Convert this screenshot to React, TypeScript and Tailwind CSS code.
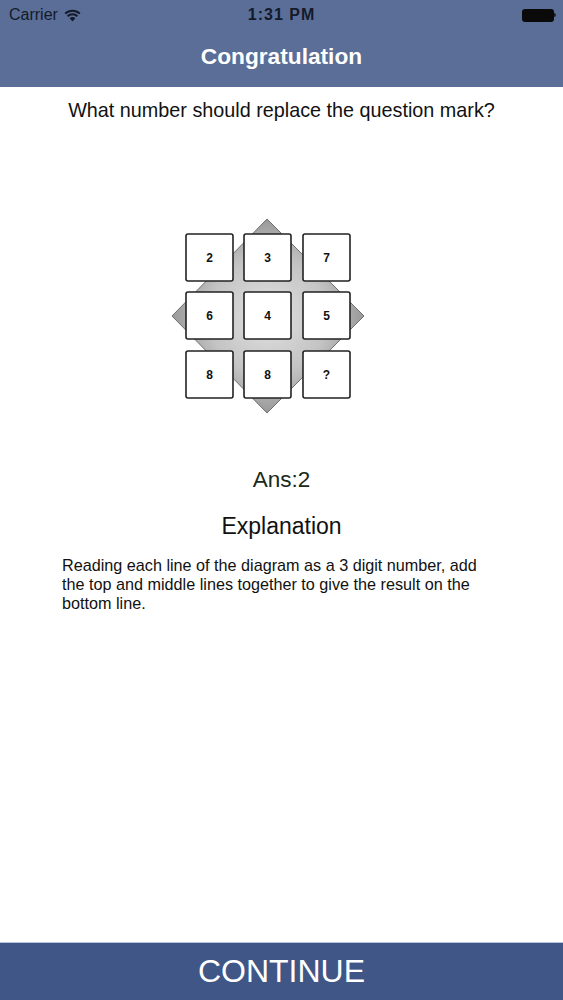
import React from "react";

const cols = [19, 77, 136];
const rows = [20, 78, 137];
const nums = [
  ["2", "3", "7"],
  ["6", "4", "5"],
  ["8", "8", "?"],
];

function Diagram() {
  return (
    <svg width="202" height="204" viewBox="0 0 202 204">
      <defs>
        <radialGradient id="g" cx="50%" cy="50%" r="55%">
          <stop offset="0%" stopColor="#e2e2e2" />
          <stop offset="55%" stopColor="#c4c4c4" />
          <stop offset="100%" stopColor="#8e8e8e" />
        </radialGradient>
      </defs>
      <polygon points="100,5 197,102 100,199 5,102" fill="url(#g)" stroke="#555" strokeWidth="0.8" />
      {rows.map((y, r) =>
        cols.map((x, c) => (
          <g key={`${r}-${c}`}>
            <rect x={x} y={y} width="47" height="47" rx="2" fill="#fff" stroke="#222" strokeWidth="1.6" />
            <text
              x={x + 23.5}
              y={y + 28}
              textAnchor="middle"
              fontFamily="Liberation Sans, Arial, sans-serif"
              fontWeight="bold"
              fontSize="12"
              fill="#111"
            >
              {nums[r][c]}
            </text>
          </g>
        ))
      )}
    </svg>
  );
}

export default function App() {
  return (
    <div className="flex h-[1000px] w-[563px] flex-col bg-white" style={{ fontFamily: "'Liberation Sans', Arial, sans-serif" }}>
      <div className="flex h-[87px] flex-col bg-[#5a6e97]">
        <div className="relative flex h-[30px] items-center pl-[9px] pr-[7px] text-[#141a2a]">
          <div className="flex items-center gap-[6px] text-[16px]">
            <span>Carrier</span>
            <svg width="17" height="13" viewBox="0 0 17 13">
              <path d="M8.5 12.5 L5.6 9.3 A4.2 4.2 0 0 1 11.4 9.3 Z" fill="#141a2a" />
              <path d="M3.6 7.2 A7 7 0 0 1 13.4 7.2" stroke="#141a2a" strokeWidth="2" fill="none" />
              <path d="M1.2 4.6 A10.5 10.5 0 0 1 15.8 4.6" stroke="#141a2a" strokeWidth="2" fill="none" />
            </svg>
          </div>
          <div className="absolute left-0 right-0 text-center text-[16px] font-semibold tracking-[1px]">1:31 PM</div>
          <div className="ml-auto flex items-center">
            <div className="h-[13px] w-[32px] rounded-[3px] bg-[#0a0a0a]" />
            <div className="h-[4px] w-[2px] rounded-r bg-[#222]" />
          </div>
        </div>
        <div className="flex flex-1 items-center justify-center pb-[4px] text-[22.7px] font-semibold text-white">
          Congratulation
        </div>
      </div>
      <div className="flex flex-1 flex-col">
        <div className="mt-[11px] text-center text-[19.8px] leading-[24px] text-[#111]">
          What number should replace the question mark?
        </div>
        <div className="mt-[92px] flex justify-start pl-[167px]">
          <Diagram />
        </div>
        <div className="mt-[49px] text-center text-[22.5px] leading-[26px] text-[#1a2a1a]">Ans:2</div>
        <div className="mt-[20px] text-center text-[23px] leading-[26px] text-[#111]">Explanation</div>
        <div className="mt-[17px] ml-[62px] w-[434px] text-[16.2px] leading-[19px] text-[#111]">
          Reading each line of the diagram as a 3 digit number, add the top and middle lines together to give the result on the bottom line.
        </div>
      </div>
      <div className="flex h-[58px] items-center justify-center border-t border-[#b8c4da] bg-[#3f5686] pb-[2px] text-[32px] text-white">
        CONTINUE
      </div>
    </div>
  );
}
